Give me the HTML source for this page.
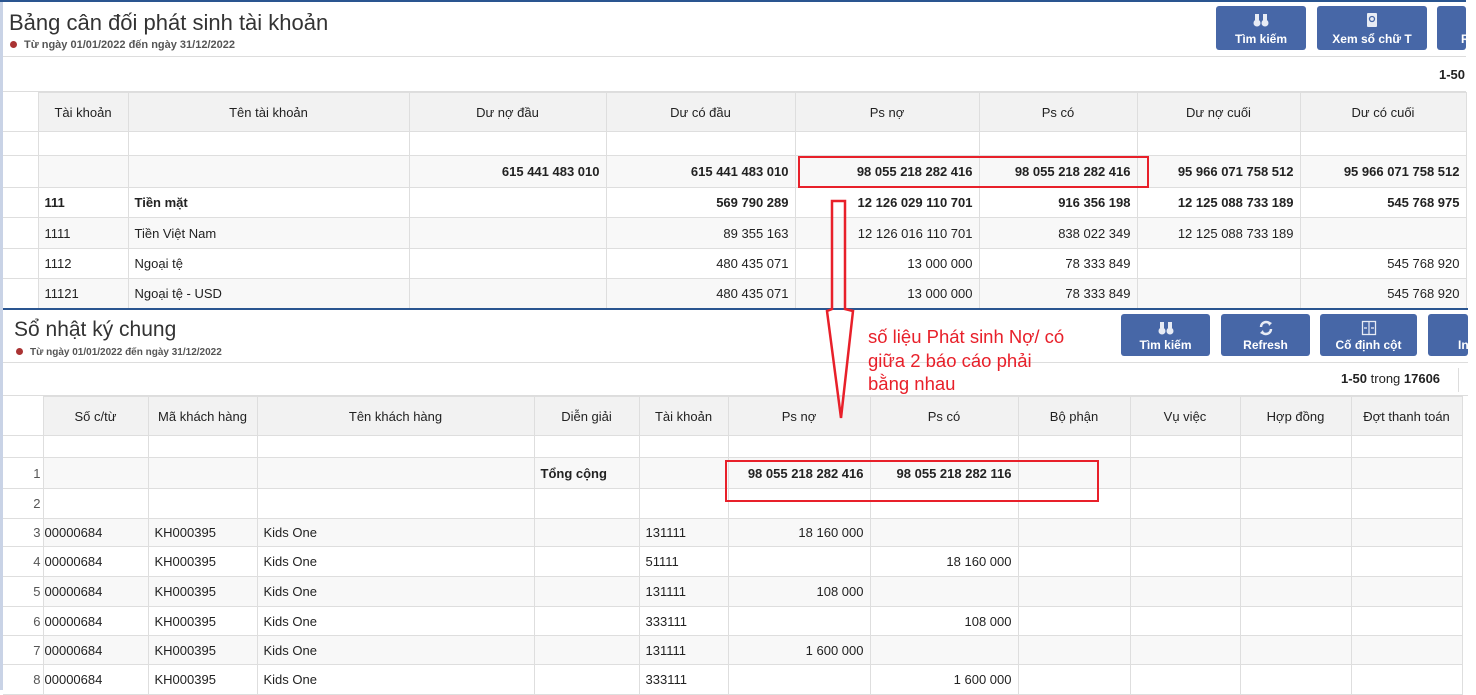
<!DOCTYPE html>
<html><head><meta charset="utf-8"><style>
*{margin:0;padding:0;box-sizing:border-box}
body{width:1476px;height:690px;overflow:hidden;background:#fff;font-family:"Liberation Sans","DejaVu Sans",sans-serif;color:#222;position:relative}
.a{position:absolute}
table{border-collapse:collapse;table-layout:fixed;position:absolute;font-size:13px}
td{border:1px solid #dedede;padding:0 6px;white-space:nowrap;overflow:hidden}
tr.h td{background:#f2f2f2;text-align:center;color:#222}
tr.g td{background:#f8f8f8}
td.n{border:none;border-bottom:1px solid #dedede;background:#fff!important;text-align:right;color:#555;padding:0 2px 0 0}
.r{text-align:right}.b{font-weight:bold}
.btn{position:absolute;background:#4767a7;border-radius:3px;color:#fff;font-size:12px;font-weight:bold;text-align:center}
.btn span{position:absolute;left:0;right:0;bottom:4px}
.btn svg{position:absolute;left:50%;top:6px;margin-left:-8px}
.t1{font-size:22px;color:#333}
.sub{font-size:11px;font-weight:bold;color:#555}
.dot{display:inline-block;width:7px;height:7px;border-radius:50%;background:#a33;margin-right:7px}
</style></head><body>
<div class="a" style="left:0;top:0;width:3px;height:690px;background:#c9d3e6"></div>
<div class="a" style="left:0;top:0;width:1466px;height:2px;background:#2a5590"></div>
<div class="a t1" style="left:9px;top:10px">Bảng cân đối phát sinh tài khoản</div>
<div class="a sub" style="left:10px;top:39px"><span class="dot"></span>Từ ngày 01/01/2022 đến ngày 31/12/2022</div>
<div class="a" style="left:3px;top:56px;width:1463px;height:1px;background:#ddd"></div>
<div class="btn" style="left:1216px;top:6px;width:90px;height:44px"><svg width="16" height="16"><rect x="2" y="2" width="4" height="6" fill="#e8ecf5"/><rect x="10" y="2" width="4" height="6" fill="#e8ecf5"/><circle cx="4" cy="11" r="3.5" fill="#e8ecf5"/><circle cx="12" cy="11" r="3.5" fill="#e8ecf5"/></svg><span>Tìm kiếm</span></div>
<div class="btn" style="left:1317px;top:6px;width:110px;height:44px"><svg width="16" height="16"><rect x="3" y="1" width="10" height="14" rx="1" fill="#e8ecf5"/><circle cx="8" cy="7" r="2.5" fill="none" stroke="#4767a7" stroke-width="1.3"/></svg><span>Xem sổ chữ T</span></div>
<div class="btn" style="left:1437px;top:6px;width:29px;height:44px"><span style="text-align:left;padding-left:24px">R</span></div>
<div class="a b" style="left:1439px;top:67px;font-size:13px">1-50</div>
<div class="a" style="left:3px;top:91px;width:1463px;height:1px;background:#ddd"></div>

<table style="left:3px;top:92px;width:1463px">
<colgroup><col style="width:35px"><col style="width:90px"><col style="width:281px"><col style="width:197px"><col style="width:189px"><col style="width:184px"><col style="width:158px"><col style="width:163px"><col style="width:166px"></colgroup>
<tr class="h" style="height:39px"><td class="n"></td><td>Tài khoản</td><td>Tên tài khoản</td><td>Dư nợ đầu</td><td>Dư có đầu</td><td>Ps nợ</td><td>Ps có</td><td>Dư nợ cuối</td><td>Dư có cuối</td></tr>
<tr style="height:24px"><td class="n"></td><td></td><td></td><td></td><td></td><td></td><td></td><td></td><td></td></tr>
<tr class="g b" style="height:32px"><td class="n"></td><td></td><td></td><td class="r">615 441 483 010</td><td class="r">615 441 483 010</td><td class="r">98 055 218 282 416</td><td class="r">98 055 218 282 416</td><td class="r">95 966 071 758 512</td><td class="r">95 966 071 758 512</td></tr>
<tr class="b" style="height:30px"><td class="n"></td><td>111</td><td>Tiền mặt</td><td></td><td class="r">569 790 289</td><td class="r">12 126 029 110 701</td><td class="r">916 356 198</td><td class="r">12 125 088 733 189</td><td class="r">545 768 975</td></tr>
<tr class="g" style="height:31px"><td class="n"></td><td>1111</td><td>Tiền Việt Nam</td><td></td><td class="r">89 355 163</td><td class="r">12 126 016 110 701</td><td class="r">838 022 349</td><td class="r">12 125 088 733 189</td><td></td></tr>
<tr style="height:30px"><td class="n"></td><td>1112</td><td>Ngoại tệ</td><td></td><td class="r">480 435 071</td><td class="r">13 000 000</td><td class="r">78 333 849</td><td></td><td class="r">545 768 920</td></tr>
<tr class="g" style="height:30px"><td class="n"></td><td>11121</td><td>Ngoại tệ - USD</td><td></td><td class="r">480 435 071</td><td class="r">13 000 000</td><td class="r">78 333 849</td><td></td><td class="r">545 768 920</td></tr>
</table>
<div class="a" style="left:798px;top:156px;width:351px;height:32px;border:2px solid #e8202a"></div>

<div class="a" style="left:0;top:308px;width:1468px;height:382px;background:#fff"></div>
<div class="a" style="left:0;top:308px;width:3px;height:382px;background:#c9d3e6"></div>
<div class="a" style="left:3px;top:308px;width:1465px;height:2px;background:#2a5590"></div>
<div class="a t1" style="left:14px;top:318px;font-size:21px">Sổ nhật ký chung</div>
<div class="a sub" style="left:16px;top:347px;font-size:10px"><span class="dot"></span>Từ ngày 01/01/2022 đến ngày 31/12/2022</div>
<div class="a" style="left:3px;top:362px;width:1465px;height:1px;background:#ddd"></div>
<div class="btn" style="left:1121px;top:314px;width:89px;height:42px"><svg width="16" height="16"><rect x="2" y="2" width="4" height="6" fill="#e8ecf5"/><rect x="10" y="2" width="4" height="6" fill="#e8ecf5"/><circle cx="4" cy="11" r="3.5" fill="#e8ecf5"/><circle cx="12" cy="11" r="3.5" fill="#e8ecf5"/></svg><span>Tìm kiếm</span></div>
<div class="btn" style="left:1221px;top:314px;width:89px;height:42px"><svg width="16" height="16"><path d="M3 7A5 5 0 0 1 12 4M13 9A5 5 0 0 1 4 12" fill="none" stroke="#e8ecf5" stroke-width="2.5"/><path d="M10 1L14 3L11 6Z M6 15L2 13L5 10Z" fill="#e8ecf5"/></svg><span>Refresh</span></div>
<div class="btn" style="left:1320px;top:314px;width:97px;height:42px"><svg width="16" height="16"><rect x="1.5" y="1.5" width="13" height="13" fill="none" stroke="#e8ecf5" stroke-width="1.3"/><path d="M8 1V15M3 8H6M10 8H13" stroke="#e8ecf5" stroke-width="1.2"/></svg><span>Cố định cột</span></div>
<div class="btn" style="left:1428px;top:314px;width:40px;height:42px"><span style="text-align:left;padding-left:30px">In</span></div>
<div class="a" style="left:1341px;top:371px;font-size:13px"><b>1-50</b> trong <b>17606</b></div>
<div class="a" style="left:1458px;top:368px;width:1px;height:24px;background:#ddd"></div>
<div class="a" style="left:3px;top:395px;width:1465px;height:1px;background:#ddd"></div>

<table style="left:3px;top:396px;width:1459px">
<colgroup><col style="width:40px"><col style="width:105px"><col style="width:109px"><col style="width:277px"><col style="width:105px"><col style="width:89px"><col style="width:142px"><col style="width:148px"><col style="width:112px"><col style="width:110px"><col style="width:111px"><col style="width:111px"></colgroup>
<tr class="h" style="height:39px"><td class="n"></td><td>Số c/từ</td><td>Mã khách hàng</td><td>Tên khách hàng</td><td>Diễn giải</td><td>Tài khoản</td><td>Ps nợ</td><td>Ps có</td><td>Bộ phận</td><td>Vụ việc</td><td>Hợp đồng</td><td>Đợt thanh toán</td></tr>
<tr style="height:22px"><td class="n"></td><td></td><td></td><td></td><td></td><td></td><td></td><td></td><td></td><td></td><td></td><td></td></tr>
<tr class="g" style="height:31px"><td class="n">1</td><td></td><td></td><td></td><td class="b">Tổng cộng</td><td></td><td class="r b">98 055 218 282 416</td><td class="r b">98 055 218 282 116</td><td></td><td></td><td></td><td></td></tr>
<tr style="height:30px"><td class="n">2</td><td></td><td></td><td></td><td></td><td></td><td></td><td></td><td></td><td></td><td></td><td></td></tr>
<tr class="g" style="height:28px"><td class="n">3</td><td style="padding-left:1px">00000684</td><td>KH000395</td><td>Kids One</td><td></td><td>131111</td><td class="r">18 160 000</td><td></td><td></td><td></td><td></td><td></td></tr>
<tr style="height:30px"><td class="n">4</td><td style="padding-left:1px">00000684</td><td>KH000395</td><td>Kids One</td><td></td><td>51111</td><td></td><td class="r">18 160 000</td><td></td><td></td><td></td><td></td></tr>
<tr class="g" style="height:30px"><td class="n">5</td><td style="padding-left:1px">00000684</td><td>KH000395</td><td>Kids One</td><td></td><td>131111</td><td class="r">108 000</td><td></td><td></td><td></td><td></td><td></td></tr>
<tr style="height:29px"><td class="n">6</td><td style="padding-left:1px">00000684</td><td>KH000395</td><td>Kids One</td><td></td><td>333111</td><td></td><td class="r">108 000</td><td></td><td></td><td></td><td></td></tr>
<tr class="g" style="height:29px"><td class="n">7</td><td style="padding-left:1px">00000684</td><td>KH000395</td><td>Kids One</td><td></td><td>131111</td><td class="r">1 600 000</td><td></td><td></td><td></td><td></td><td></td></tr>
<tr style="height:30px"><td class="n">8</td><td style="padding-left:1px">00000684</td><td>KH000395</td><td>Kids One</td><td></td><td>333111</td><td></td><td class="r">1 600 000</td><td></td><td></td><td></td><td></td></tr>
</table>
<div class="a" style="left:725px;top:460px;width:374px;height:42px;border:2px solid #e8202a"></div>

<div class="a" style="left:868px;top:325px;font-size:18.5px;line-height:23.5px;color:#e8202a">số liệu Phát sinh Nợ/ có<br>giữa 2 báo cáo phải<br>bằng nhau</div>
<svg class="a" style="left:0;top:0" width="1476" height="690"><polygon points="832,201 845,201 845,309 853,311 841,418 827,311 832,309" fill="none" stroke="#e8202a" stroke-width="2.5"/></svg>
</body></html>
